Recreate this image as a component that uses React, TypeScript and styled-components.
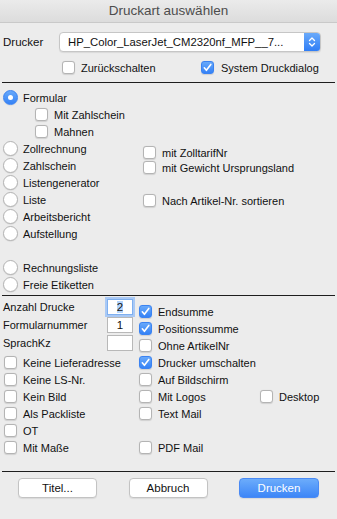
import React from "react";
import styled, { createGlobalStyle } from "styled-components";

const GlobalStyle = createGlobalStyle`
  html, body {
    margin: 0;
    padding: 0;
    background: #ececec;
  }
  * {
    box-sizing: border-box;
  }
`;

const Window = styled.div`
  width: 337px;
  height: 519px;
  background: #ececec;
  font-family: "Liberation Sans", Arial, sans-serif;
  font-size: 11px;
  color: #111;
  display: flex;
  flex-direction: column;
  overflow: hidden;
`;

const TitleBar = styled.div`
  height: 23px;
  flex-shrink: 0;
  background: linear-gradient(#ebebeb, #dcdcdc);
  border-bottom: 1px solid #c9c9c9;
  display: flex;
  align-items: center;
  justify-content: center;
  font-size: 13.5px;
  color: #4d4d4d;
  padding-bottom: 1px;
`;

const PrinterPanel = styled.div`
  padding: 9px 0 0 3px;
`;

const PrinterRow = styled.div`
  display: flex;
  align-items: center;
  height: 20px;
`;

const PrinterLabel = styled.div`
  width: 56px;
  font-size: 11.5px;
`;

const Select = styled.div`
  width: 262px;
  height: 20px;
  background: #fff;
  border: 1px solid #c6c6c6;
  border-radius: 4px;
  box-shadow: 0 1px 1px rgba(0, 0, 0, 0.08);
  display: flex;
  align-items: center;
  overflow: hidden;
`;

const SelectText = styled.div`
  flex: 1;
  padding-left: 8px;
  font-size: 11.3px;
  white-space: nowrap;
`;

const Stepper = styled.div`
  width: 16px;
  height: 100%;
  background: linear-gradient(#6aaafa, #2f7df6);
  display: flex;
  align-items: center;
  justify-content: center;
`;

const OptionsRow = styled.div`
  display: flex;
  align-items: center;
  height: 13px;
  margin-top: 9px;
  padding-left: 59px;
`;

const OptionItem = styled.div<{ $w?: number }>`
  display: flex;
  align-items: center;
  width: ${(p) => (p.$w ? `${p.$w}px` : "auto")};
  white-space: nowrap;
`;

const Divider = styled.div`
  height: 1px;
  background: #1e1e1e;
  margin: 0 2px;
  flex-shrink: 0;
`;

const TopDivider = styled(Divider)`
  margin-top: 8px;
`;

const TypeSection = styled.div`
  display: grid;
  grid-template-columns: 140px 1fr;
  padding: 6px 0 0 3px;
  height: 212px;
`;

const Column = styled.div<{ $top?: number }>`
  display: flex;
  flex-direction: column;
  padding-top: ${(p) => p.$top ?? 0}px;
`;

const Row = styled.div<{ $h?: number; $indent?: number }>`
  height: ${(p) => p.$h ?? 17}px;
  display: flex;
  align-items: center;
  padding-left: ${(p) => p.$indent ?? 0}px;
  white-space: nowrap;
`;

const Spacer = styled.div<{ $h: number }>`
  height: ${(p) => p.$h}px;
`;

const Label = styled.span<{ $gap?: number }>`
  margin-left: ${(p) => p.$gap ?? 7}px;
`;

const Box = styled.span<{ $checked?: boolean }>`
  width: 13px;
  height: 13px;
  flex-shrink: 0;
  border-radius: 3px;
  border: 1px solid ${(p) => (p.$checked ? "#3b83f2" : "#b4b4b4")};
  background: ${(p) =>
    p.$checked ? "linear-gradient(#68a9fa, #3582f6)" : "#fff"};
  box-shadow: 0 0.5px 1px rgba(0, 0, 0, 0.12);
  display: flex;
  align-items: center;
  justify-content: center;
`;

const Circle = styled.span<{ $checked?: boolean }>`
  width: 15px;
  height: 15px;
  flex-shrink: 0;
  border-radius: 50%;
  border: 1px solid ${(p) => (p.$checked ? "#3b83f2" : "#b4b4b4")};
  background: ${(p) =>
    p.$checked ? "linear-gradient(#68a9fa, #3582f6)" : "#fff"};
  box-shadow: 0 0.5px 1px rgba(0, 0, 0, 0.12);
  display: flex;
  align-items: center;
  justify-content: center;
`;

const Dot = styled.span`
  width: 5px;
  height: 5px;
  border-radius: 50%;
  background: #fff;
`;

const BottomSection = styled.div`
  display: flex;
  height: 175px;
`;

const LeftColumn = styled(Column)`
  width: 139px;
  padding-left: 3px;
  padding-top: 2px;
`;

const FieldRow = styled.div`
  height: 18px;
  display: flex;
  align-items: center;
  justify-content: space-between;
  padding-right: 6px;
`;

const Field = styled.div<{ $focused?: boolean }>`
  width: 26px;
  height: 16px;
  background: #fff;
  border: 1px solid ${(p) => (p.$focused ? "#7fb0f0" : "#b8b8b8")};
  box-shadow: ${(p) => (p.$focused ? "0 0 0 2px #a9c9f5" : "none")};
  display: flex;
  align-items: center;
  justify-content: center;
  font-size: 11.5px;
`;

const Selected = styled.span`
  background: #b3d4fc;
`;

const CheckList = styled.div`
  margin-top: 2px;
  padding-left: 1px;
  display: flex;
  flex-direction: column;
`;

const MiddleColumn = styled(Column)`
  width: 121px;
`;

const Footer = styled.div`
  display: flex;
  justify-content: space-between;
  padding: 6px 18px 0 18px;
`;

const Button = styled.button<{ $primary?: boolean }>`
  width: ${(p) => (p.$primary ? 80 : 79)}px;
  height: 20px;
  border-radius: 4px;
  font-family: "Liberation Sans", Arial, sans-serif;
  font-size: 11.5px;
  padding: 0;
  border: 1px solid ${(p) => (p.$primary ? "#4a8af4" : "#c3c3c3")};
  background: ${(p) =>
    p.$primary ? "linear-gradient(#6cacfb, #3d86f7)" : "#fff"};
  color: ${(p) => (p.$primary ? "#fff" : "#111")};
  box-shadow: 0 1px 1px rgba(0, 0, 0, 0.08);
`;

const Check = () => (
  <svg width="11" height="11" viewBox="0 0 11 11">
    <path
      d="M2.3 5.8 L4.4 8.3 L8.8 2.4"
      fill="none"
      stroke="#fff"
      strokeWidth="1.6"
      strokeLinecap="round"
      strokeLinejoin="round"
    />
  </svg>
);

type OptionProps = { label: string; checked?: boolean; gap?: number };

const CheckBox: React.FC<OptionProps> = ({ label, checked, gap }) => (
  <>
    <Box $checked={checked}>{checked && <Check />}</Box>
    <Label $gap={gap}>{label}</Label>
  </>
);

const Radio: React.FC<OptionProps> = ({ label, checked }) => (
  <>
    <Circle $checked={checked}>{checked && <Dot />}</Circle>
    <Label $gap={5}>{label}</Label>
  </>
);

const radios = [
  "Zollrechnung",
  "Zahlschein",
  "Listengenerator",
  "Liste",
  "Arbeitsbericht",
  "Aufstellung",
];

const leftChecks = [
  "Keine Lieferadresse",
  "Keine LS-Nr.",
  "Kein Bild",
  "Als Packliste",
  "OT",
  "Mit Maße",
];

const middleChecks: [string, boolean][] = [
  ["Endsumme", true],
  ["Positionssumme", true],
  ["Ohne ArtikelNr", false],
  ["Drucker umschalten", true],
  ["Auf Bildschirm", false],
  ["Mit Logos", false],
  ["Text Mail", false],
  ["", false],
  ["PDF Mail", false],
];

const App: React.FC = () => {
  return (
    <Window>
      <GlobalStyle />
      <TitleBar>Druckart auswählen</TitleBar>

      <PrinterPanel>
        <PrinterRow>
          <PrinterLabel>Drucker</PrinterLabel>
          <Select>
            <SelectText>HP_Color_LaserJet_CM2320nf_MFP__7...</SelectText>
            <Stepper>
              <svg width="8" height="12" viewBox="0 0 8 12">
                <path
                  d="M1.5 4.5 L4 2 L6.5 4.5 M1.5 7.5 L4 10 L6.5 7.5"
                  fill="none"
                  stroke="#fff"
                  strokeWidth="1.3"
                  strokeLinecap="round"
                  strokeLinejoin="round"
                />
              </svg>
            </Stepper>
          </Select>
        </PrinterRow>
        <OptionsRow>
          <OptionItem $w={139}>
            <CheckBox label="Zurückschalten" gap={6} />
          </OptionItem>
          <OptionItem>
            <CheckBox label="System Druckdialog" checked gap={7} />
          </OptionItem>
        </OptionsRow>
      </PrinterPanel>
      <TopDivider />

      <TypeSection>
        <Column>
          <Row>
            <Radio label="Formular" checked />
          </Row>
          <Row $indent={32}>
            <CheckBox label="Mit Zahlschein" gap={6} />
          </Row>
          <Row $indent={32}>
            <CheckBox label="Mahnen" gap={6} />
          </Row>
          {radios.map((r) => (
            <Row key={r}>
              <Radio label={r} />
            </Row>
          ))}
          <Spacer $h={17} />
          <Row>
            <Radio label="Rechnungsliste" />
          </Row>
          <Row>
            <Radio label="Freie Etiketten" />
          </Row>
        </Column>
        <Column $top={56}>
          <Row $h={15}>
            <CheckBox label="mit ZolltarifNr" gap={6} />
          </Row>
          <Row $h={15}>
            <CheckBox label="mit Gewicht Ursprungsland" gap={6} />
          </Row>
          <Spacer $h={18} />
          <Row $h={15}>
            <CheckBox label="Nach Artikel-Nr. sortieren" gap={6} />
          </Row>
        </Column>
      </TypeSection>
      <Divider />

      <BottomSection>
        <LeftColumn>
          <FieldRow>
            <span>Anzahl Drucke</span>
            <Field $focused>
              <Selected>2</Selected>
            </Field>
          </FieldRow>
          <FieldRow>
            <span>Formularnummer</span>
            <Field>1</Field>
          </FieldRow>
          <FieldRow>
            <span>SprachKz</span>
            <Field />
          </FieldRow>
          <CheckList>
            {leftChecks.map((c) => (
              <Row key={c}>
                <CheckBox label={c} gap={6} />
              </Row>
            ))}
          </CheckList>
        </LeftColumn>
        <MiddleColumn $top={7}>
          {middleChecks.map(([c, on], i) =>
            c ? (
              <Row key={c}>
                <CheckBox label={c} checked={on} gap={6} />
              </Row>
            ) : (
              <Spacer key={i} $h={17} />
            )
          )}
        </MiddleColumn>
        <Column $top={92}>
          <Row>
            <CheckBox label="Desktop" gap={6} />
          </Row>
        </Column>
      </BottomSection>
      <Divider />

      <Footer>
        <Button>Titel...</Button>
        <Button>Abbruch</Button>
        <Button $primary>Drucken</Button>
      </Footer>
    </Window>
  );
};

export default App;
